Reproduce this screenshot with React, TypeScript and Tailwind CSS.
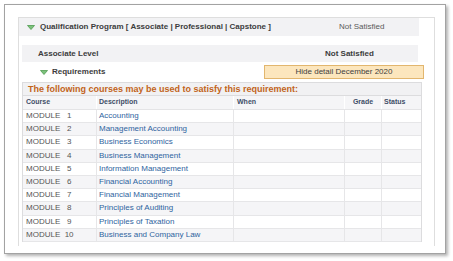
const courses = [
  { num: "1", desc: "Accounting" },
  { num: "2", desc: "Management Accounting" },
  { num: "3", desc: "Business Economics" },
  { num: "4", desc: "Business Management" },
  { num: "5", desc: "Information Management" },
  { num: "6", desc: "Financial Accounting" },
  { num: "7", desc: "Financial Management" },
  { num: "8", desc: "Principles of Auditing" },
  { num: "9", desc: "Principles of Taxation" },
  { num: "10", desc: "Business and Company Law" },
];

const Caret = () => (
  <svg width="8" height="5" viewBox="0 0 8 5" className="shrink-0">
    <polygon points="0.5,0.5 7.5,0.5 4,4.5" fill="#7cc27c" stroke="#4f9a4f" strokeWidth="0.8" />
  </svg>
);

export default function App() {
  return (
    <div className="w-[453px] h-[261px] bg-white pt-[4px] pl-[4px] font-['Liberation_Sans',Arial,sans-serif]">
      <div className="w-[442px] h-[250px] border border-[#a3a3a3] bg-white shadow-[2px_2px_3px_rgba(0,0,0,0.3)] pl-[13px] pt-[12px]">
        <div className="w-[417px] h-[229px] border-l border-t border-r border-[#dedede]">
          {/* Program header */}
          <div className="w-[400px] h-[18px] bg-[#f2f2f4] flex items-center">
            <div className="w-[320px] flex items-center pl-[8px] gap-[5px]">
              <Caret />
              <span className="text-[8px] font-bold text-[#3c3c3c] whitespace-nowrap">
                Qualification Program [ Associate | Professional | Capstone ]
              </span>
            </div>
            <span className="text-[8px] text-[#5a5a5a]">Not Satisfied</span>
          </div>

          {/* Level row */}
          <div className="mt-[9px] ml-[3px] w-[396px] h-[17px] bg-[#f2f2f4] flex items-center pl-[16px]">
            <span className="w-[287px] text-[8px] font-bold text-[#3c3c3c]">Associate Level</span>
            <span className="text-[8px] font-bold text-[#3c3c3c]">Not Satisfied</span>
          </div>

          {/* Requirements */}
          <div className="h-[20px] flex items-center">
            <div className="ml-[21px] flex items-center gap-[4px]">
              <Caret />
              <span className="text-[8px] font-bold text-[#3c3c3c]">Requirements</span>
            </div>
            <button
              type="button"
              className="ml-auto mr-[10px] w-[160px] h-[14px] border border-[#e2b66e] bg-[#fce6bd] text-[8px] text-[#404040] leading-none"
            >
              Hide detail December 2020
            </button>
          </div>

          {/* Course table */}
          <div className="ml-[3px] w-[400px] border-l border-t border-r border-[#dcdcde]">
            <div className="h-[13px] bg-[#f1f1f3] flex items-center pl-[5px] border-b border-[#dcdcde]">
              <span className="text-[9px] font-bold text-[#c2631a] leading-none">
                The following courses may be used to satisfy this requirement:
              </span>
            </div>
            <div className="grid grid-cols-[74px_137px_111px_37px_1fr] h-[14px] bg-[#f5f5f7] text-[7px] font-bold text-[#3f4e67] border-b border-[#e4e4e6]">
              <div className="flex items-center pl-[3px] border-r border-white">Course</div>
              <div className="flex items-center pl-[2px] border-r border-white">Description</div>
              <div className="flex items-center pl-[3px] border-r border-white">When</div>
              <div className="flex items-center justify-center border-r border-white">Grade</div>
              <div className="flex items-center pl-[2px]">Status</div>
            </div>
            {courses.map((c, i) => (
              <div
                key={c.num}
                className={`grid grid-cols-[74px_137px_111px_37px_1fr] h-[13.2px] text-[8px] border-b border-[#e6e6e8] ${
                  i % 2 === 0 ? "bg-white" : "bg-[#f5f5f7]"
                }`}
              >
                <div className="flex items-center pl-[3px] border-r border-[#e6e6e8] text-[#555] whitespace-pre">
                  {c.num.length === 1 ? `MODULE   ${c.num}` : `MODULE  ${c.num}`}
                </div>
                <div className="flex items-center pl-[2px] border-r border-[#e6e6e8] text-[#2f64a0] whitespace-nowrap">
                  {c.desc}
                </div>
                <div className="border-r border-[#e6e6e8]" />
                <div className="border-r border-[#e6e6e8]" />
                <div />
              </div>
            ))}
          </div>
        </div>
      </div>
    </div>
  );
}
